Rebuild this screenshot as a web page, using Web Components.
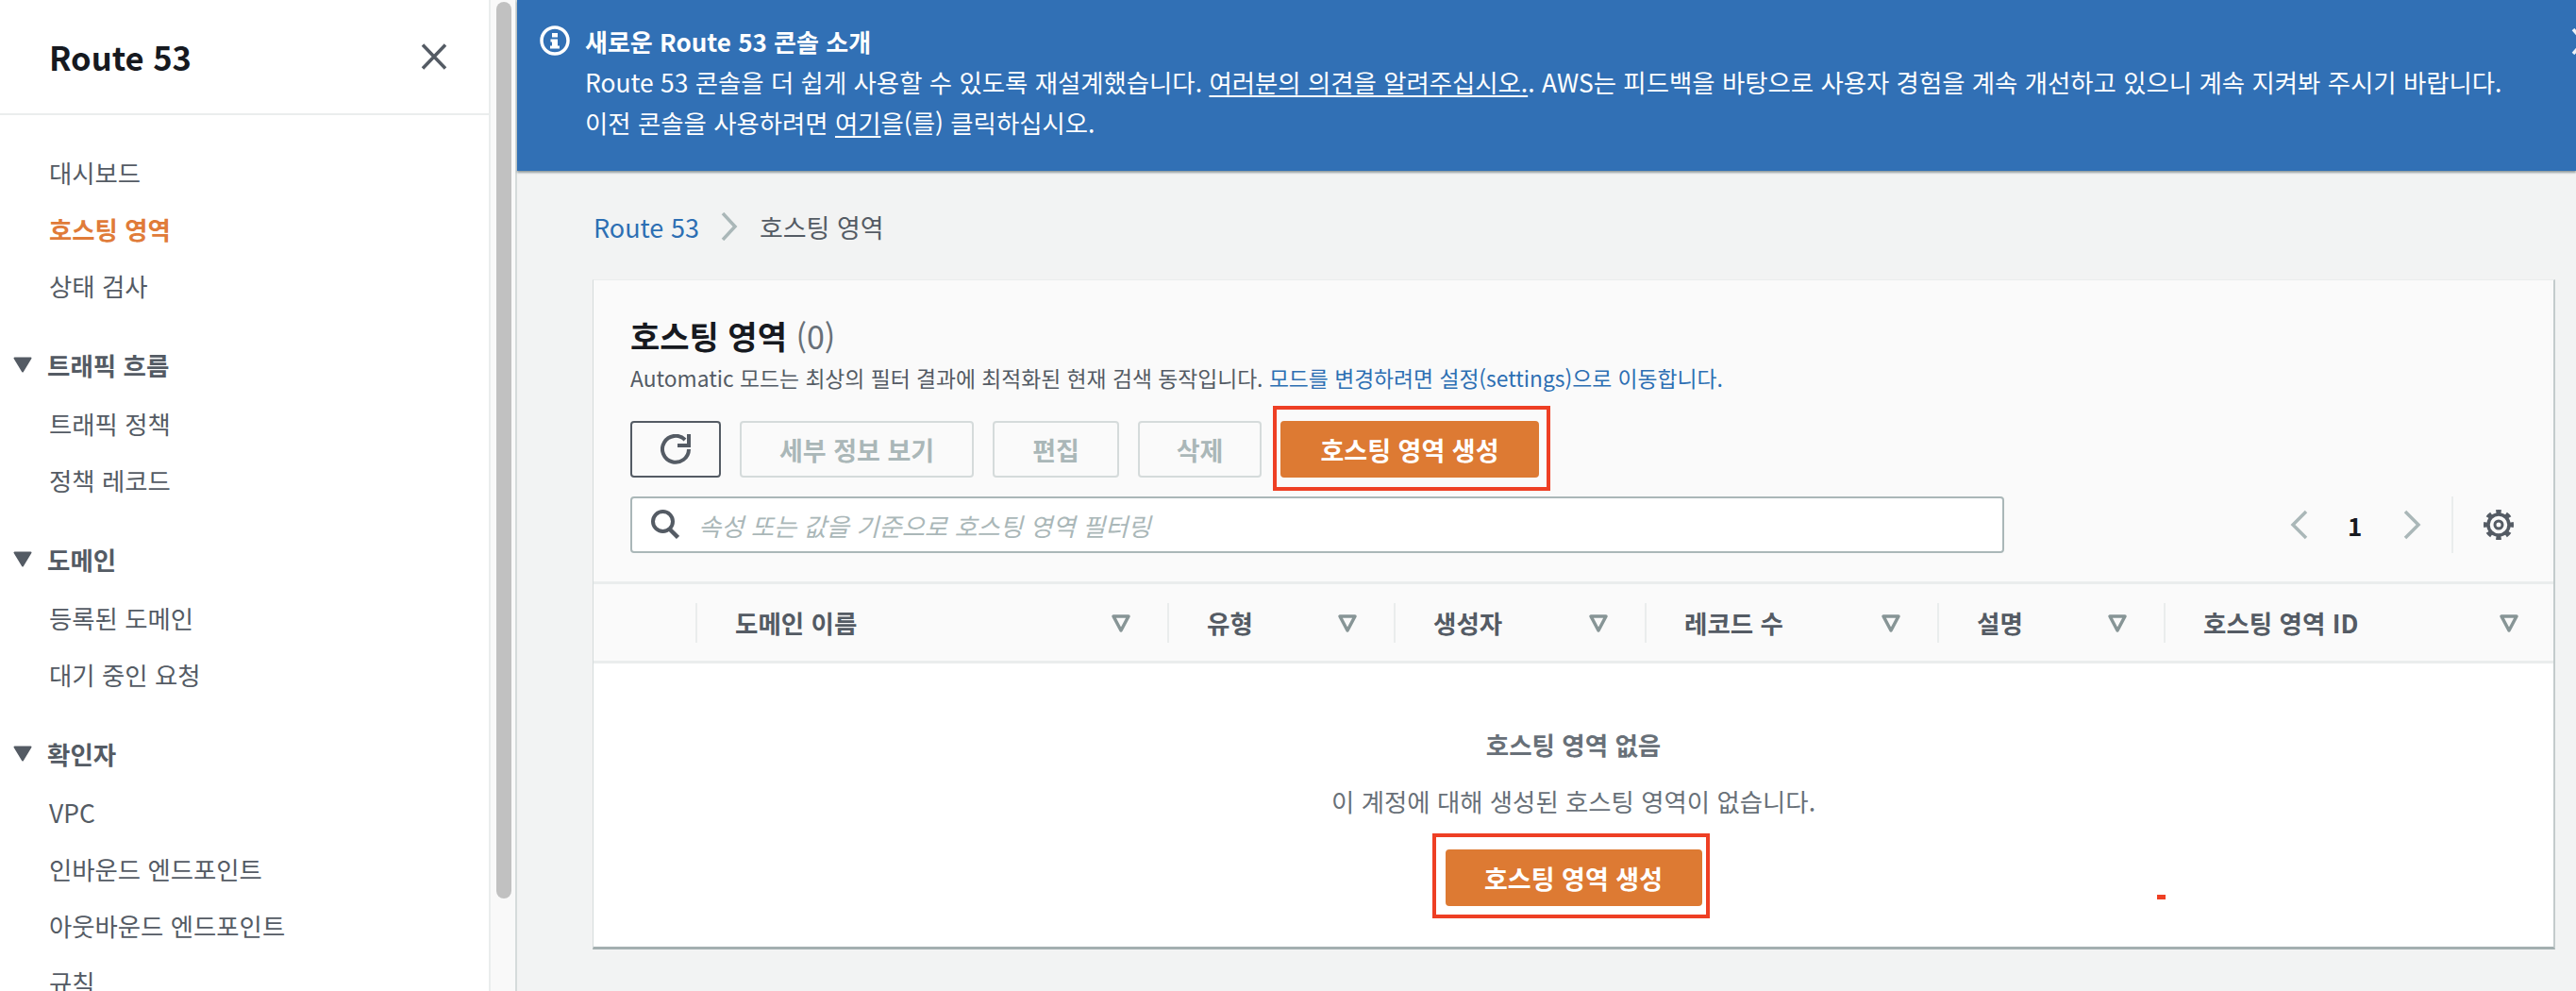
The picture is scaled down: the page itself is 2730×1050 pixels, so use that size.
<!DOCTYPE html>
<html lang="ko">
<head>
<meta charset="utf-8">
<title>Route 53</title>
<style>
  html, body { margin: 0; height: 100%; overflow: hidden; }
  body { font-family: "Noto Sans CJK KR", "Noto Sans", sans-serif; color: #16191f; }
  #app { display: flex; width: 2730px; height: 1050px; overflow: hidden; }
</style>
</head>
<body>
<div id="app">
  <side-nav>
    <nav-item>대시보드</nav-item>
    <nav-item active>호스팅 영역</nav-item>
    <nav-item>상태 검사</nav-item>
    <nav-section label="트래픽 흐름">
      <nav-item>트래픽 정책</nav-item>
      <nav-item>정책 레코드</nav-item>
    </nav-section>
    <nav-section label="도메인">
      <nav-item>등록된 도메인</nav-item>
      <nav-item>대기 중인 요청</nav-item>
    </nav-section>
    <nav-section label="확인자">
      <nav-item>VPC</nav-item>
      <nav-item>인바운드 엔드포인트</nav-item>
      <nav-item>아웃바운드 엔드포인트</nav-item>
      <nav-item>규칙</nav-item>
    </nav-section>
  </side-nav>
  <main-area>
    <info-banner></info-banner>
    <bread-crumbs></bread-crumbs>
    <zones-card></zones-card>
  </main-area>
</div>

<script>
// Left navigation with its own fake scrollbar
class SideNav extends HTMLElement {
  constructor() {
    super();
    this.shadow = this.attachShadow({ mode: "open" });
  }

  connectedCallback() {
    this.shadow.innerHTML = `
      <style>
        :host { display: flex; flex: none; width: 548px; height: 1050px; }
        .panel { width: 518px; background: #fff; overflow: hidden; border-right: 2px solid #eaeded; }
        .head {
          height: 120px; display: flex; align-items: center; justify-content: space-between;
          padding: 0 43px 0 52px; border-bottom: 2px solid #eaeded;
        }
        h1 { margin: 0; font-size: 34.500px; line-height: 1; font-weight: 700; color: #16191f; }
        svg { display: block; }
        .list { padding-top: 30px; }
        .track {
          background: #f9f9f9; border-right: 2px solid #d5dbdb;
          padding: 2px 0 0 6px; box-sizing: border-box; flex: none; width: 28px;
        }
        .thumb { width: 16px; height: 950px; background: #c1c1c1; border-radius: 8px; }
      </style>
      <div class="panel">
        <div class="head">
          <h1>Route 53</h1>
          <svg width="30" height="30" viewBox="0 0 30 30"><path d="M3 2.500 27 27.500M27 2.500 3 27.500" stroke="#545b64" stroke-width="3.500" fill="none"/></svg>
        </div>
        <div class="list"><slot></slot></div>
      </div>
      <div class="track"><div class="thumb"></div></div>
    `;
  }
}

class NavItem extends HTMLElement {
  constructor() {
    super();
    this.shadow = this.attachShadow({ mode: "open" });
  }

  connectedCallback() {
    this.shadow.innerHTML = `
      <style>
        :host {
          display: flex; align-items: center; height: 60px; padding-left: 52px;
          font-size: 26.400px; color: #545b64; white-space: nowrap;
        }
        :host([active]) { color: #e07b39; font-weight: 700; }
      </style>
      <slot></slot>
    `;
  }
}

class NavSection extends HTMLElement {
  constructor() {
    super();
    this.shadow = this.attachShadow({ mode: "open" });
  }

  connectedCallback() {
    const label = this.getAttribute("label") || "";
    this.shadow.innerHTML = `
      <style>
        :host { display: block; margin-top: 24px; }
        .label {
          display: flex; align-items: center; height: 60px; margin-bottom: 2px;
          padding-left: 14px; gap: 16px; font-size: 26.500px; font-weight: 700; color: #545b64;
        }
        svg { display: block; flex: none; }
      </style>
      <div class="label">
        <svg width="20" height="17" viewBox="0 0 20 17"><path d="M1.500 1.500H18.500L10 15.500Z" fill="#545b64" stroke="#545b64" stroke-width="2" stroke-linejoin="round"/></svg>
        <span>${label}</span>
      </div>
      <slot></slot>
    `;
  }
}

class MainArea extends HTMLElement {
  constructor() {
    super();
    this.shadow = this.attachShadow({ mode: "open" });
  }

  connectedCallback() {
    this.shadow.innerHTML = `
      <style>
        :host { display: flex; flex-direction: column; flex: none; width: 2182px; height: 1050px; background: #f2f3f3; }
      </style>
      <slot></slot>
    `;
  }
}

// Blue notice on top of the main area
class InfoBanner extends HTMLElement {
  constructor() {
    super();
    this.shadow = this.attachShadow({ mode: "open" });
  }

  connectedCallback() {
    this.shadow.innerHTML = `
      <style>
        :host {
          display: flex; position: relative; height: 181px; box-sizing: border-box; flex: none;
          padding: 22px 0 0 24px; gap: 16px; background: #3170b5; color: #fff;
          font-size: 26.400px; line-height: 43px; box-shadow: 0 2px 2px rgba(0,28,36,.4);
          overflow: hidden;
        }
        .icon { flex: none; margin-top: 5px; display: block; }
        .title { font-weight: 700; font-size: 26px; }
        .text { white-space: nowrap; }
        a { color: inherit; text-decoration: underline; text-underline-offset: 3px; }
        .close { position: absolute; left: 2177px; top: 30px; }
      </style>
      <svg class="icon" width="32" height="32" viewBox="0 0 32 32">
        <circle cx="16" cy="16" r="14" fill="none" stroke="#fff" stroke-width="3.500"/>
        <path d="M13 8h6v4.500h-6zM11.500 14.500H19v7h2v3H11v-3h2v-4h-1.500z" fill="#fff"/>
      </svg>
      <div class="text">
        <div class="title">새로운 Route 53 콘솔 소개</div>
        <div>Route 53 콘솔을 더 쉽게 사용할 수 있도록 재설계했습니다. <a href="#">여러분의 의견을 알려주십시오.</a>. AWS는 피드백을 바탕으로 사용자 경험을 계속 개선하고 있으니 계속 지켜봐 주시기 바랍니다.</div>
        <div>이전 콘솔을 사용하려면 <a href="#">여기</a>을(를) 클릭하십시오.</div>
      </div>
      <svg class="close" width="26" height="28" viewBox="0 0 26 28"><path d="M2 1 24 27M24 1 2 27" stroke="#fff" stroke-width="3.500" opacity=".9" fill="none"/></svg>
    `;
  }
}

class BreadCrumbs extends HTMLElement {
  constructor() {
    super();
    this.shadow = this.attachShadow({ mode: "open" });
  }

  connectedCallback() {
    this.shadow.innerHTML = `
      <style>
        :host {
          display: flex; align-items: center; flex: none; height: 60px; margin: 29px 0 26px;
          padding-left: 81px; font-size: 27px; color: #545b64;
        }
        a { color: #2d6fb3; text-decoration: none; }
        svg { display: block; margin: 0 23px; }
      </style>
      <a href="#">Route 53</a>
      <svg width="18" height="30" viewBox="0 0 18 30"><path d="M2 1 15 15 2 29" fill="none" stroke="#aab7b8" stroke-width="3.500"/></svg>
      <span>호스팅 영역</span>
    `;
  }
}

// A plain console button: variant is normal, disabled or primary
class ConsoleButton extends HTMLElement {
  constructor() {
    super();
    this.shadow = this.attachShadow({ mode: "open" });
  }

  connectedCallback() {
    this.shadow.innerHTML = `
      <style>
        :host {
          display: inline-flex; align-items: center; justify-content: center; box-sizing: border-box;
          height: 60px; border-radius: 4px; font-size: 27px; font-weight: 700;
          border: 2px solid #d5dbdb; color: #aab7b8; background: #fafafa; flex: none;
        }
        :host([variant="normal"]) { border-color: #545b64; color: #545b64; background: #fafafa; }
        :host([variant="primary"]) { border-color: #dd7a33; background: #dd7a33; color: #fff; }
      </style>
      <slot></slot>
    `;
  }
}

class ColumnHead extends HTMLElement {
  constructor() {
    super();
    this.shadow = this.attachShadow({ mode: "open" });
  }

  connectedCallback() {
    this.shadow.innerHTML = `
      <style>
        :host {
          display: flex; align-items: center; justify-content: space-between; box-sizing: border-box;
          height: 42px; padding: 0 var(--pad-right, 38px) 0 40px; border-left: 2px solid #eaeded;
          font-size: 26.500px; font-weight: 700; color: #545b64; white-space: nowrap;
        }
        svg { display: block; flex: none; }
      </style>
      <slot></slot>
      <svg width="22" height="22" viewBox="0 0 22 22"><path d="M3 4H19L11 19Z" fill="none" stroke="#879596" stroke-width="3.500" stroke-linejoin="round"/></svg>
    `;
  }
}

// Hosted zones table card with toolbar, filter and empty state
class ZonesCard extends HTMLElement {
  constructor() {
    super();
    this.shadow = this.attachShadow({ mode: "open" });
  }

  connectedCallback() {
    this.shadow.innerHTML = `
      <style>
        :host {
          display: block; position: relative; flex: none; box-sizing: border-box; width: 2080px; height: 710px;
          margin-left: 80px; background: #fff; border-left: 1px solid #d5dbdb; border-right: 2px solid #c3cbcc;
          border-top: 1px solid #eaeded; border-bottom: 3px solid #a3afb0;
        }
        .top { background: #fafafa; height: 322px; box-sizing: border-box; padding: 35px 39px 0; border-bottom: 3px solid #eaeded; }
        h2 { margin: 0; font-size: 34px; line-height: 48px; font-weight: 700; color: #16191f; }
        h2 span { font-weight: 400; color: #687078; }
        .desc { margin-top: 4px; font-size: 22.800px; line-height: 34px; color: #545b64; white-space: nowrap; }
        .desc a { color: #2d6fb3; text-decoration: none; }
        .tools { display: flex; gap: 20px; margin-top: 28px; }
        .filter-row { display: flex; align-items: center; margin-top: 20px; }
        .search {
          display: flex; align-items: center; gap: 20px; box-sizing: border-box; width: 1456px; height: 60px;
          padding-left: 20px; background: #fff; border: 2px solid #aab7b8; border-radius: 4px;
          font-size: 26.300px; font-style: italic; color: #aab7b8; white-space: nowrap;
        }
        .pager { display: flex; align-items: center; margin-left: 303px; }
        .page { font-size: 26px; font-weight: 700; color: #16191f; margin: 0 43px 0 41px; }
        .sep { width: 2px; height: 60px; background: #eaeded; margin: 0 32px; }
        svg { display: block; flex: none; }
        .head {
          display: grid; grid-template-columns: 108px 500px 240px 266px 310px 240px 1fr; align-items: center;
          height: 84px; background: #fafafa; border-bottom: 3px solid #eaeded; box-sizing: border-box;
        }
        .empty { display: flex; flex-direction: column; align-items: center; padding-top: 66px; color: #687078; }
        .empty b { font-size: 26.500px; line-height: 40px; }
        .empty p { margin: 20px 0 0; font-size: 26.400px; line-height: 40px; }
        .empty console-button { width: 272px; margin-top: 31px; }
        .mark { position: absolute; box-sizing: border-box; border: 4px solid #ee3f24; }
        .dot { position: absolute; left: 1657px; top: 651px; width: 9px; height: 5px; background: #ee3f24; }
      </style>
      <div class="top">
        <h2>호스팅 영역 <span>(0)</span></h2>
        <div class="desc">Automatic 모드는 최상의 필터 결과에 최적화된 현재 검색 동작입니다. <a href="#">모드를 변경하려면 설정(settings)으로 이동합니다.</a></div>
        <div class="tools">
          <console-button variant="normal" style="width:96px">
            <svg width="32" height="32" viewBox="0 0 32 32"><path d="M26 6A14 14 0 1 0 30 16" fill="none" stroke="#545b64" stroke-width="4"/><path d="M30 0V12H18" fill="none" stroke="#545b64" stroke-width="4"/></svg>
          </console-button>
          <console-button style="width:248px">세부 정보 보기</console-button>
          <console-button style="width:134px">편집</console-button>
          <console-button style="width:131px">삭제</console-button>
          <console-button variant="primary" style="width:274px">호스팅 영역 생성</console-button>
        </div>
        <div class="filter-row">
          <div class="search">
            <svg width="30" height="32" viewBox="0 0 30 32"><circle cx="12.500" cy="12.500" r="10.500" fill="none" stroke="#545b64" stroke-width="4"/><path d="M19 20 28.500 29.500" stroke="#545b64" stroke-width="4.500"/></svg>
            <span>속성 또는 값을 기준으로 호스팅 영역 필터링</span>
          </div>
          <div class="pager">
            <svg width="20" height="32" viewBox="0 0 20 32"><path d="M17 2 3 16 17 30" fill="none" stroke="#aab7b8" stroke-width="3.500"/></svg>
            <span class="page">1</span>
            <svg width="20" height="32" viewBox="0 0 20 32"><path d="M3 2 17 16 3 30" fill="none" stroke="#aab7b8" stroke-width="3.500"/></svg>
            <div class="sep"></div>
            <svg width="32" height="32" viewBox="0 0 32 32">
              <circle cx="16" cy="16" r="11" fill="none" stroke="#545b64" stroke-width="3.500"/>
              <circle cx="16" cy="16" r="14" fill="none" stroke="#545b64" stroke-width="4" pathLength="16" stroke-dasharray="1 1" stroke-dashoffset=".5"/>
              <circle cx="16" cy="16" r="4" fill="none" stroke="#545b64" stroke-width="3"/>
            </svg>
          </div>
        </div>
      </div>
      <div class="head">
        <span></span>
        <column-head>도메인 이름</column-head>
        <column-head>유형</column-head>
        <column-head>생성자</column-head>
        <column-head>레코드 수</column-head>
        <column-head>설명</column-head>
        <column-head style="--pad-right:36px">호스팅 영역 ID</column-head>
      </div>
      <div class="empty">
        <b>호스팅 영역 없음</b>
        <p>이 계정에 대해 생성된 호스팅 영역이 없습니다.</p>
        <console-button variant="primary">호스팅 영역 생성</console-button>
      </div>
      <div class="mark" style="left:720px;top:133px;width:294px;height:90px"></div>
      <div class="mark" style="left:889px;top:586px;width:294px;height:90px"></div>
      <div class="dot"></div>
    `;
  }
}

customElements.define("side-nav", SideNav);
customElements.define("nav-item", NavItem);
customElements.define("nav-section", NavSection);
customElements.define("main-area", MainArea);
customElements.define("info-banner", InfoBanner);
customElements.define("bread-crumbs", BreadCrumbs);
customElements.define("console-button", ConsoleButton);
customElements.define("column-head", ColumnHead);
customElements.define("zones-card", ZonesCard);
</script>
</body>
</html>
